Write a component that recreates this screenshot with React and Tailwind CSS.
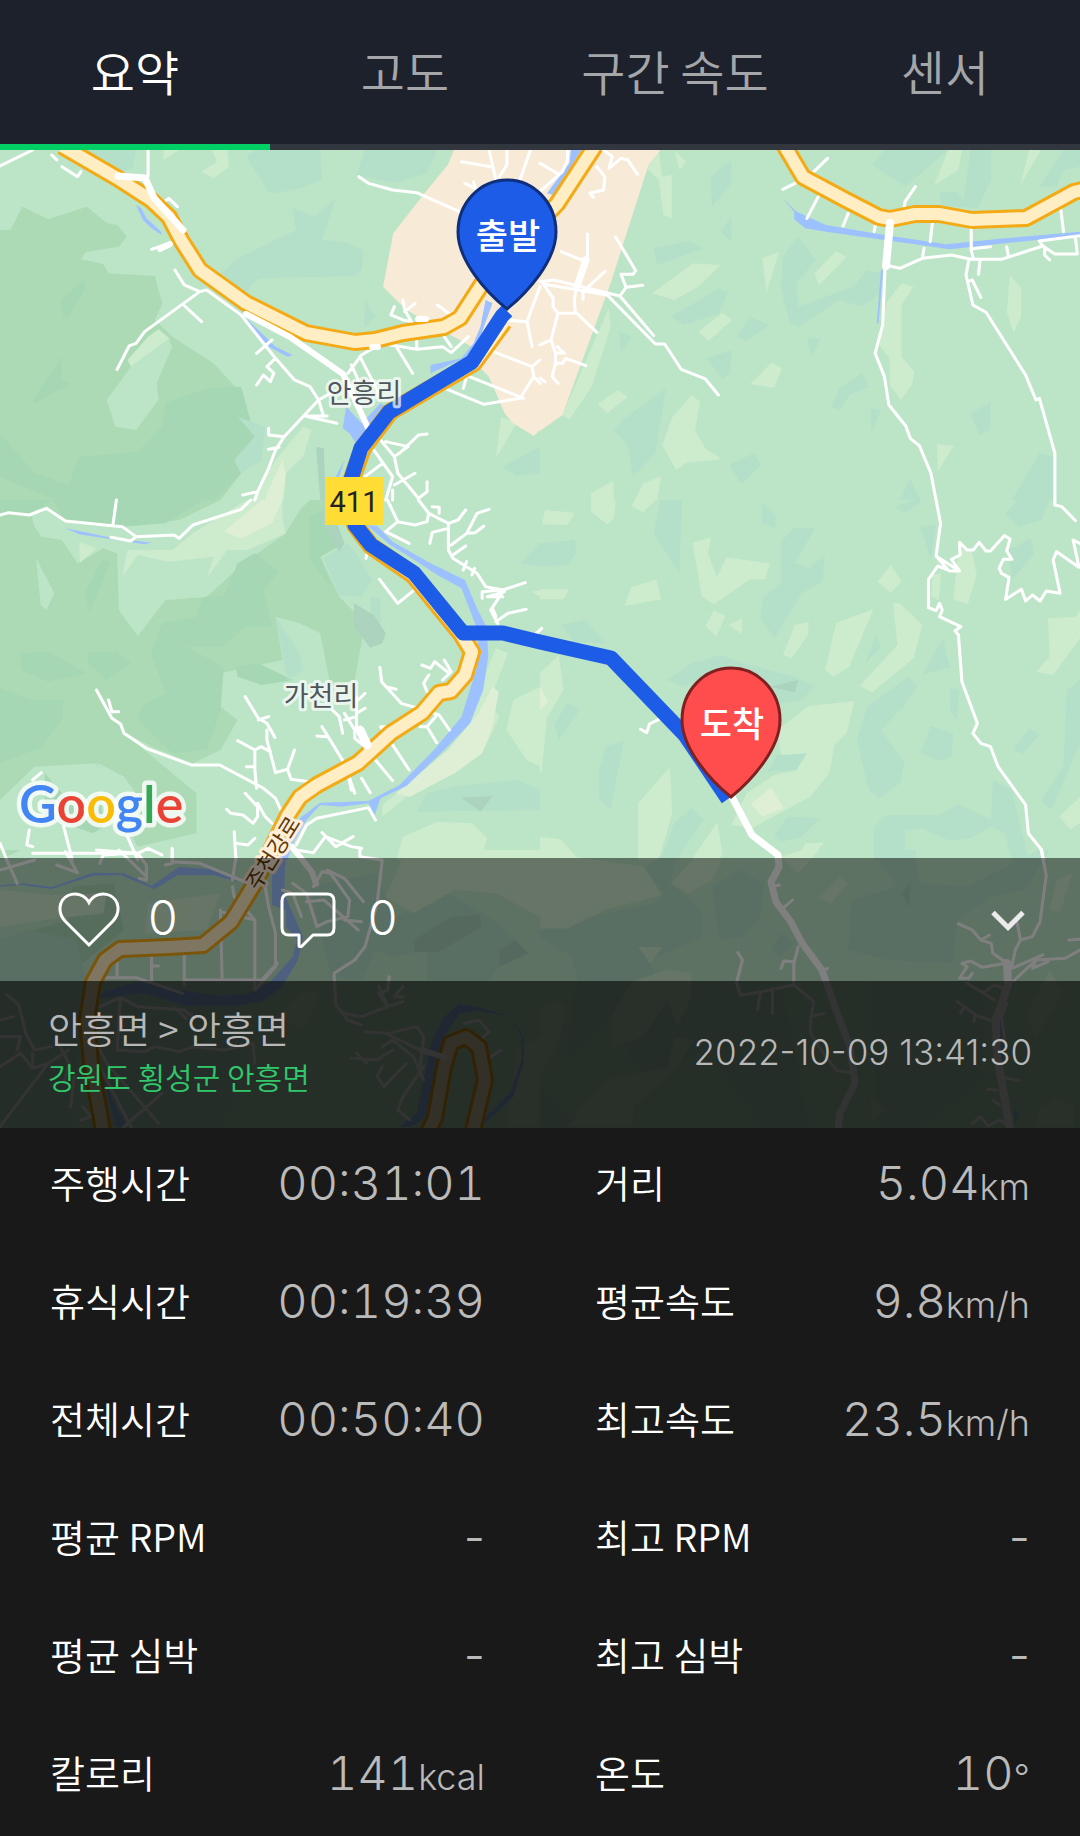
import { ChevronDown } from "lucide-react";

const TABS = ["요약", "고도", "구간 속도", "센서"];

const STATS = [
  { label: "주행시간", value: "00:31:01" },
  { label: "거리", value: "5.04", unit: "km" },
  { label: "휴식시간", value: "00:19:39" },
  { label: "평균속도", value: "9.8", unit: "km/h" },
  { label: "전체시간", value: "00:50:40" },
  { label: "최고속도", value: "23.5", unit: "km/h" },
  { label: "평균 RPM" },
  { label: "최고 RPM" },
  { label: "평균 심박" },
  { label: "최고 심박" },
  { label: "칼로리", value: "141", unit: "kcal" },
  { label: "온도", value: "10", unit: "°" },
];

// fill of each land layer, painted in this order
const LAND = [
  ["forest", "#abdab5"],
  ["deep", "#a5d7b4"],
  ["teal", "#b4dfc9"],
  ["base", "#bce4c7"],
  ["light", "#cdebcd"],
  ["pale", "#deefd5"],
  ["town", "#f7ead6"],
  ["rock", "#abd3bd"],
];

// every tile has its own 1568 x 1080 grid
const TILES = [
  {
    x: 0,
    y: 140,
    forest:
      "M0 270H30L65 200L140 238L252 200L310 250L340 255L368 290L345 320L250 335L235 358L300 372L315 400L450 408L460 450L472 490L450 540L500 590L620 670L700 760L740 890L680 960L700 1000L640 1080H0Z",
    deep:
      "M0 880L100 1000L200 1035L230 950L400 935L470 860L480 790L600 745L700 740L740 890L680 960L700 1000L620 1080H160L0 1010ZM175 480L245 420V450L200 530H185ZM95 780L180 650V720L205 730L100 790Z",
    teal:
      "M250 30H395L385 85L340 100ZM715 50L740 30H930L935 120L870 145L800 160L780 155ZM1060 30H1270L1240 100L1145 130L1035 105ZM620 420L690 355L860 270L850 205L915 230L975 175L935 300L1000 305L1055 330L1050 390L1028 408L750 415L700 470ZM1060 480L1090 530L1057 565ZM690 830L770 860L760 960L700 1000L680 960L740 890ZM1460 980L1568 920V1000L1500 1008Z",
    base: "M380 680L490 595L500 620L455 730L460 780L395 870L335 860L310 780Z",
    light:
      "M475 30H520L475 60ZM615 30H660L665 80L620 115L585 95L630 65ZM460 568L492 595L380 680L370 660L430 590ZM730 1080L800 960L880 860L905 870L880 950L830 1000L825 1080ZM1440 955L1455 830L1500 850Z",
    pale: "M775 1060L820 960L830 1000L820 1080H770Z",
    town:
      "M1318 30H1568V870L1550 888L1490 850L1465 820L1420 710L1390 680L1370 620L1300 580L1180 510L1112 440L1142 280L1240 150L1300 75Z",
    rock: "M918 920L940 925L945 1080H930Z",
    water:
      "M395 195L410 205L425 235L468 275L470 285L440 265L415 240ZM590 440L700 520L690 525ZM700 530L720 540L800 620L850 645L835 650L780 620ZM1410 480L1430 490L1405 560L1380 640L1250 700V675L1340 655L1375 610L1395 560ZM1005 800L1050 850L1105 790L1120 800L1040 920L1015 880L995 865ZM1000 960L985 1010H975Z",
    roads:
      "M0 78L95 30M430 30V108M150 45L165 60M180 80L225 110L235 95M440 328L490 310M508 390L535 435L580 455L600 450L700 525L800 655L855 720L900 740L925 780L825 890L800 930L780 985L748 1055L705 1065M748 1055L740 1080M580 455L420 575L395 610L375 618L340 688M530 492L585 545M790 600L745 640M800 655L775 680L795 700L785 725L765 705L745 735M925 780L960 760M925 780L940 830M885 828H950M885 828L978 850M825 890L780 885V865M810 922L780 928M1042 110L1070 130L1140 150L1210 158L1340 218M470 190L490 175L515 200M1090 620L1050 645L1010 700M1045 650L1100 760M1020 675L1040 720M1145 610L1198 700M1105 610L1210 628L1285 620L1310 638L1360 590M1210 600V625M1290 590L1310 620M1170 480L1175 510L1195 545L1170 540L1135 525L1145 500M1175 515L1205 490M1270 495L1310 525M1340 65L1425 80M1420 30L1440 120M1472 30V75L1450 110M1540 30L1510 120M1350 130L1380 145L1375 125M1420 630L1545 680L1568 660M1285 742L1405 793L1510 775L1550 710L1545 680M1350 705L1520 775M1355 710L1345 745M1550 710L1568 730M1470 540L1530 545L1568 440M1530 545L1545 620M1085 930L1140 1010L1120 1080M1105 900L1145 950L1155 1000L1215 1075M1120 905L1185 920L1145 950M1160 940L1215 885L1240 882M1110 970L1060 1010M1145 1035L1205 1000M1240 1025V1055L1215 1075M1140 1050V1080",
  },
  {
    x: 540,
    y: 140,
    teal:
      "M965 75L1000 30H1185L1060 140ZM1160 155H1210L1230 180L1250 30H1310V120L1270 205L1165 195ZM1450 140L1520 30H1568V80L1520 90L1500 140ZM495 110L555 60V130L500 200ZM525 275L555 230V305ZM330 325L430 303L475 325L340 375ZM380 530L520 445L545 460L520 520L420 555ZM750 290L800 360L745 430L750 500L910 440L950 390L995 400L990 460L935 500L870 480L750 560L725 545L700 450L705 350ZM570 590L610 530L665 555L600 602ZM485 655L558 630L550 700L530 718ZM775 595H815L790 650ZM230 575L265 590L235 640ZM215 870L240 840L365 745L335 940L270 1010L255 915ZM845 800L870 745L935 700L955 740L900 765L870 810ZM1250 820L1310 785L1305 870L1275 885ZM550 975L620 940L642 975L585 1033ZM1370 1080L1450 940L1495 950V1080ZM960 805L990 810L962 880ZM1075 1018L1105 1080H1045Z",
    light:
      "M390 30L425 65L405 90ZM310 85L345 30L355 110L383 105V235L358 225L345 120ZM1185 30H1225L1215 90L1145 135ZM1420 30H1455L1395 135ZM325 460L445 370L525 375L460 440L390 480ZM645 355L695 335L658 455ZM860 333L890 352L810 435L797 400ZM460 575L530 518L558 540L490 602ZM1050 430L1085 440L1050 495V650L1087 695L1080 735L1048 780L1015 735V655L985 615L1005 490ZM1365 405L1397 445V530L1375 578L1355 515ZM200 505L205 560L150 740L85 840L65 825ZM610 733L672 668L703 683L680 743ZM168 792L225 750L255 770L195 820ZM440 765L465 785L450 870L480 925L528 958L425 968L395 990L355 915L385 830ZM1153 912L1202 918L1155 993ZM275 1080L300 1030L352 1008L340 1080ZM148 1060L213 1023L215 1080H148Z",
    town: "M0 30H350L315 75L205 430L65 825L0 873Z",
    water:
      "M90 30H120L40 165L20 160L85 70ZM705 175L745 215L830 255L1000 285L1180 313L1350 295L1568 275V286L1350 310L1190 328L1000 300L830 275L770 265L738 238V215ZM990 390H996L983 550H978Z",
    roads:
      "M705 148L750 125M835 55L780 110M808 170L775 235M895 220L880 258M975 250L970 275M1090 140L1060 185L1055 215M1140 245L1133 305M1015 378L1045 385L1110 355L1195 345L1250 358H1340L1460 318L1450 303L1568 287M1115 325L1110 355M1252 265V330L1258 355M1255 326L1308 320M1355 320L1360 348M1460 318L1495 342H1560L1555 295M1465 320V345L1480 360M1512 205L1520 275M1245 360L1237 405L1257 495L1295 517L1410 705L1440 780L1450 775L1495 940V1080M1243 425L1255 420L1280 472M1278 360L1273 403M1002 378L995 555L973 640L1000 710L1013 795L1062 858L1075 895L1102 918L1135 1000L1150 1080M0 70L50 100M80 30V60L65 95L0 155M185 30L210 50L200 85L235 55L255 60L283 103M165 80L188 110L185 150L145 160L155 172M220 292L278 392L270 403H235L250 442L232 468L330 587M250 442L298 436M0 425L40 420L232 468M10 432L195 465L335 612H362L410 688L480 717L518 765M138 282V350L120 360L62 335M105 440L100 480L102 515L165 577M10 432L38 475V500L52 520H102M52 520L32 600L0 615M32 600L45 640V670L35 710L52 730M45 640L70 638M45 670H65L75 655L133 677M0 715L15 725M188 395L125 455V478M50 620L70 640",
  },
  {
    x: 0,
    y: 500,
    forest:
      "M0 45L90 40L100 80L120 110L180 120L225 190L300 145L340 160L345 330L400 408L480 300L600 290L660 235L700 195L830 100L870 30L900 0H960L990 130L930 170L985 290L1060 370L1030 540L960 560L930 400L870 370L800 350L820 480L640 520L640 620L690 660L640 750L560 790L440 740L350 690L570 880V1000L400 1040L330 900L280 790L100 800L0 900ZM0 0H640L520 60L350 80L190 65L130 25L0 45Z",
    deep:
      "M155 0H590L480 70L350 80L190 65ZM60 460L145 455L250 520L140 545L60 510ZM255 458L340 455L380 490L310 540L255 490ZM0 565L90 600L185 600L180 660L120 740L0 790ZM590 290L650 290L690 190L740 160L810 215L765 270L790 380H710L650 440L540 440L650 500L640 630L600 750L500 760L400 660L410 620L480 580L440 460L470 370L570 350ZM900 50L960 20L1000 130L930 170L960 260L900 180ZM530 245L570 165L592 180L555 260ZM245 280L300 175L320 190L260 335ZM685 500L750 490L850 540L760 555L690 530ZM0 0H150L90 40H0ZM130 820L230 940L280 880L350 950L270 1000L130 950Z",
    teal:
      "M940 175L1010 130L1040 170L1080 240L1050 290L985 285ZM1075 290L1105 295V375L1080 370ZM800 350L870 460L880 510L835 540ZM1510 190L1568 130V200ZM1320 860L1500 840L1568 870V930L1210 935L1240 880Z",
    base: "M365 170L650 150L690 190L600 290L480 300L400 408L345 330ZM105 175L158 280L135 330L118 315ZM285 790L360 830L410 900L390 980L300 1000Z",
    light:
      "M355 230L370 150L500 150L560 100L700 10L720 0H820V60L830 100L720 150L660 150L600 235L620 170L490 185L400 165ZM230 125L280 145L232 188ZM1440 445L1475 460L1420 610L1450 650L1400 760L1320 820L1180 890L1110 950V915L1240 810L1350 700L1390 570ZM1568 560V800L1530 780L1470 690L1490 600ZM1150 1080L1170 1010L1270 965L1370 970L1415 1015L1395 1080ZM1545 275L1568 270V290Z",
    pale: "M650 95L760 0H820L790 70L700 115ZM1430 560L1448 575L1430 680L1400 760L1320 820L1190 890L1150 880L1300 750L1390 640Z",
    rock: "M1028 310L1085 345L1120 400L1110 430L1075 443L1028 380ZM950 0L1000 130L985 155L930 60ZM1340 893L1430 888L1395 935Z",
    water:
      "M190 85L330 115L440 128L420 133L230 103ZM1065 75L1095 78L1140 125L1250 190L1350 240L1385 325L1412 380L1418 465L1403 570L1365 670L1290 750L1180 858L1105 895L1088 945L1070 910L990 920L930 915L890 960L850 1030L835 1080H820L870 955L930 908L1070 903L1160 855L1260 750L1340 650L1385 500L1390 400L1340 265L1270 225L1195 175L1130 133Z",
    roads:
      "M0 45L25 38L85 45L135 25L190 63L355 80L395 110L505 105L520 115L560 75L700 28L728 0M338 0L328 75M322 112L380 123L395 110M280 570L325 655L350 672L360 700L425 745L555 795H638L765 865L800 895L820 940M315 600L325 635L345 635M712 590L750 655L775 670L798 712M750 660L780 650M775 690V720L800 818L835 808L855 750M835 808L845 838L920 848M690 722L740 750L758 740L785 755M740 750V810L745 865M715 800H740M712 880L748 920V950L735 970L705 945L670 940L658 928M748 910L770 950L790 970M1103 502L1108 545L1165 610L1215 625M1120 560L1150 568M1120 680H1105L1188 810M935 680L1000 790L1030 880M920 708L950 710M1010 820L1020 870M1050 835L1075 878M1090 780L1140 842M1215 625L1275 645L1305 690M1240 680L1268 728M1220 680H1240L1265 650M1225 495L1250 505L1262 485L1280 500L1305 520M1290 480L1310 515L1285 540M1245 525L1230 550L1240 575M1102 238L1155 310L1205 268M1068 145L1063 175M1125 0L1155 65L1120 95L1188 130M1155 65L1205 75L1240 65L1245 40L1215 0M1245 40L1302 70V150L1315 175L1385 220L1410 260L1460 270L1525 248M1255 20L1275 22V40M1302 70L1330 60L1352 30M1302 85L1255 97L1248 130M1310 135L1355 100L1385 40L1420 28M1355 100L1380 98L1405 78M1315 165L1352 138M1355 185L1345 210M1378 205L1370 225M1460 275L1425 330L1445 370M1460 290H1415L1465 275M1400 295L1400 275L1455 270M1430 325L1440 350M1440 365L1475 340L1528 328M965 630L985 650L995 700M1000 640L1030 690V715L1060 740M1000 660L1035 650M1035 590V690M1035 640L1060 625M1040 600L1060 580M860 1035L890 975L920 955L1070 923L1090 960M860 1050L910 1058L945 1010L1020 1040L1050 1045M935 998L975 1040L1025 1010M0 1030L20 1080M85 990L78 1035L95 1040M95 1060L400 1060L430 1045L470 1065M185 980L210 1080M370 1010L400 1080M500 1045V1080M680 995L685 1080M685 1030L720 1035L740 1015M95 840L120 818",
  },
  {
    x: 540,
    y: 500,
    teal:
      "M350 0H412L405 220L330 100ZM0 130L100 120L105 160L80 195L0 200ZM60 375L130 360L190 430L100 425ZM370 540L440 490L525 465L590 490L740 530L798 560L760 600L700 610L560 540L480 530L420 560ZM645 10L683 45V85L645 70ZM700 125L735 85H798L740 190L780 205L828 165L820 245L760 280L680 415L640 350L650 290L700 250ZM1350 40L1390 0H1480L1455 60L1390 80ZM1105 78L1150 75L1135 180ZM1030 20L1090 0H1110L1060 40ZM1360 150L1425 115L1435 160L1370 240ZM975 405L990 440L945 490ZM1170 415L1190 500L1110 525ZM950 620L1070 530L1095 560L1055 620L990 690L1058 790L1045 850L985 895L955 870L920 720ZM1135 678L1200 700L1195 770L1160 782L1105 760ZM1530 570L1568 540V730L1485 930L1455 900L1520 800ZM1375 750L1420 685L1450 705L1400 762ZM1190 560L1218 570L1210 660L1190 630ZM80 607L115 630L55 720L42 675ZM170 820L190 740L243 722L205 930L172 895ZM365 1040L390 970L440 925L475 960L420 1040L400 1080H350ZM680 1005L720 950L812 955L760 1010L700 1025ZM970 980L1005 945H1160L1215 912L1310 960L1315 840L1370 870L1400 1000L1420 1080H1370L1350 1000L1310 980L1250 1015L1190 1022L1110 985L1060 990V1080H970ZM690 765L775 760L745 810L660 815Z",
    light:
      "M148 0H220L215 55L195 73L148 35ZM275 0H335L300 37L265 18ZM15 30L100 38L80 75L5 73ZM0 268H85L68 298H0ZM265 262L338 238L352 298L245 318ZM443 128L497 112L488 160L513 232L542 172L667 190L655 238H610L505 313L470 290ZM505 330L538 348L512 410L480 378ZM547 375L588 355L586 402ZM740 375L780 365L778 405L730 475L705 465ZM860 368L968 328L898 500L852 530L828 510ZM1025 310H1045L1110 375L1085 475L965 577L928 558L1038 435ZM1018 195L1050 245L1018 278L980 245ZM1215 150L1253 148L1268 225L1242 313L1200 298ZM1140 225L1165 220L1158 300L1135 290ZM1475 355L1555 350L1568 330V415L1490 525L1440 515L1480 470ZM690 690L780 618L913 603L890 700L855 735L840 820L785 890L615 985L555 975L600 880L680 825L745 810L775 760L700 765ZM0 520L55 465L68 570L20 655L5 815H0ZM285 910L378 800L384 940L345 1080H285ZM515 965L530 1060L520 1080H440ZM0 1010L60 1018L115 1080H0ZM755 1060L770 1030L825 1028L780 1080H730ZM1508 950L1568 890V970L1540 988Z",
    pale: "M0 560L25 605L0 630ZM612 912L672 862L708 925L645 950Z",
    rock: "M670 560L750 540L740 577Z",
    roads:
      "M1150 0L1163 70L1150 168L1185 210L1155 198L1128 238V323L1150 332L1160 310L1168 330L1160 350L1222 380L1205 392L1215 405L1225 545L1270 670L1257 700L1280 730L1308 740L1330 800L1410 915L1418 1000L1457 1050L1462 1080M1150 168L1218 213H1190M1218 213L1195 178L1220 165L1218 127L1240 150H1258L1275 127L1295 153H1308L1348 107L1365 117L1355 152L1370 178H1345L1333 205L1340 220L1362 232L1352 298L1398 268L1410 303L1430 285L1452 303L1470 273L1510 280L1490 180L1500 155L1565 202L1548 120L1568 130M1495 0V15L1515 20L1555 62M345 658L318 672L310 698L292 688M5 385L-20 410",
  },
  {
    x: 0,
    y: 850,
    forest: "M0 0H60L0 30ZM210 110L330 100L360 240L240 340L0 350V270L200 210Z",
    teal:
      "M0 270L80 240L220 270L250 393L200 830H0ZM900 110L1090 70L1150 200L1300 130L1420 200L1500 270L1420 393H1240V300L1140 320L1090 300L1050 393L960 380ZM300 393L700 393V700L640 830H300Z",
    light:
      "M0 120L150 135L310 130L300 190L130 210L0 230ZM1180 0H1568V200L1440 130L1320 120L1200 190L1120 140ZM430 160L640 130L600 240L420 250ZM800 500L880 420L930 430L880 540ZM1500 600L1568 560V830H1470Z",
    rock: "M1200 270L1310 200L1390 195L1400 230L1275 305H1205ZM1450 300L1495 270L1535 310L1450 350Z",
    water:
      "M0 106L70 100L150 111L270 68L360 70L440 107L520 50L640 60L690 95L620 76L515 76L450 118L350 75L270 77L150 117L60 105L0 110ZM790 40L830 0L825 130L850 190L880 260L865 330L820 410L760 455L690 467H540L420 430L290 445L300 425L400 395L500 418L640 438L720 432L785 395L850 320L862 270L830 230L830 180L790 165ZM290 660L330 760L370 830H340ZM1252 580L1290 500L1335 462L1390 472L1480 500L1390 482L1335 490L1290 560L1240 800L1190 830H1160L1210 790ZM1480 500L1520 560V640L1490 740L1430 800L1390 830L1410 800L1480 730L1515 630L1515 560Z",
    roads:
      "M20 30L50 100M100 30L0 60M190 5L225 68L165 45M280 0L400 10L425 45V90L405 85M345 0L425 80M380 10L300 15L290 40M500 0V40L480 45M500 35L580 40L710 95M685 20L675 90M640 180L645 390M640 185L740 210V415M675 110L680 140L740 210M770 110L780 170L800 250V350L740 420M805 340L760 390H540M535 310V405M440 318V390M440 348H460M340 320V380M300 383H395L530 430M0 510L40 500M20 435L55 465L75 550L100 600L150 590M0 560L60 560M0 650L60 610L95 655L140 640L0 830M60 560L50 600M95 655V610M140 640L200 600M170 580L200 640L185 700M290 470L350 443L400 470L535 480L560 500M350 443L340 600L420 605L450 590L520 605L560 590L650 600L735 580L740 640M510 475L540 505M285 590L310 640L460 820M285 640L380 830M470 730L360 830M240 770L265 800L235 810M215 680L205 770M820 120L850 130L875 200M850 100L890 130L920 230L950 215L1010 200L1015 150L960 70L935 65L910 110M950 60L1000 85L1055 155M890 155L940 150L985 190L1040 240M1000 210L1050 215M1045 0V20L1110 30L1095 160L1060 290L1030 330L970 370L975 465L1010 510L1050 525M1060 545L1120 550L1230 605M1130 380L1125 420L1100 430L1125 470L1050 500L1000 490M1100 410L1125 470L1170 455M1170 410L1145 440L1170 440M1130 550L1210 530L1230 560L1220 650M1110 590L1140 570L1200 620L1230 690M1035 610L1065 640M1020 625L1095 630L1140 600M1110 650L1095 680L1115 710L1180 640M1230 650L1170 740L1155 780L1190 810M1350 520L1390 510L1420 545L1395 570M1455 600L1420 625",
  },
  {
    x: 540,
    y: 850,
    teal:
      "M295 60L375 0H400L380 100L470 180V260L320 330L290 290L350 393H110L90 320L0 260V240L150 200L330 160L355 130ZM500 110L580 60L650 100L640 200L590 260L520 270ZM905 150L1040 110L970 20V0H1090L1100 100L1240 110L1450 0H1480L1410 120L1310 140L1210 210L1200 340L1010 330L895 300ZM670 300L700 250L740 280L700 320ZM100 393H700L780 830H650L480 600L300 680L200 500L80 640ZM960 393L1300 393L1280 700L1100 830H980ZM0 700L100 830H0Z",
    light:
      "M0 24L100 20L300 50L355 135L200 175L80 235H0ZM380 100L450 24H530L500 90L430 130ZM810 145L870 80L895 100L845 160ZM1480 180L1500 90L1545 70L1510 190ZM285 290L355 292L320 340ZM700 20L760 0H810L750 70ZM210 590V490L270 393L370 360L440 370V440L400 530L370 450L300 560ZM75 830L190 690L370 650L390 560L450 570L390 660L270 770V830ZM0 480L45 450L75 470L60 560L0 680ZM1410 500L1480 360L1520 430L1440 560ZM1445 780L1500 740L1550 770V830H1440ZM960 735L1005 780L965 810Z",
    rock: "M1050 130L1075 100V175Z",
    water: "M1350 460L1325 500L1330 640L1345 660L1340 520ZM1375 780L1390 790L1380 820Z",
    roads:
      "M1455 0L1470 75L1452 215L1430 260L1395 270L1380 300L1370 350M1395 270L1385 215M1215 222L1255 240L1280 270L1310 280L1315 310L1350 335M1280 270L1305 255M1370 355L1460 315M1375 393L1440 330L1525 325L1568 300M1535 270L1568 268M1440 330L1430 355L1475 335M1350 340L1285 352L1250 333L1225 340L1240 350L1218 385H1245L1255 370M1240 400L1320 450M1290 425L1320 405L1345 415M1212 455L1265 495L1310 512M1235 470L1220 490M1265 495L1260 515M1355 460L1340 500L1350 580M1335 680L1390 692M1300 718L1325 720M1315 750L1335 765M1255 820L1280 800L1300 828L1335 810L1360 828M750 290L737 340V405L795 455L787 500L825 490M787 500L785 550L830 620L862 662L910 670M737 335L708 333L700 355M733 150L705 175M695 105L675 110M735 405L645 425L583 435L570 400L588 330L575 308M640 425L632 480M675 415V490M835 355L815 365",
  },
];

const HIGHWAYS = [
  "M62 146L117 178L151 200L169 217L181 240L200 270L246 303L306 333L355 342L375 340L403 333L444 327L460 318L482 284L500 262L557 204L595 146",
  "M780 138L803 177L846 200L879 217L890 219L915 214L939 214L972 220L1026 218L1074 192L1090 188",
  "M504 322L474 363L390 412L363 448L351 481L355 525L371 546L413 575L461 634L472 652L465 675L451 691L439 693L422 713L391 733L358 763L317 785L300 797L288 815L255 883L231 922L203 945L169 947L120 949L105 960L93 982L87 1020L91 1063L103 1130",
  "M428 1132L435 1118L444 1067L451 1043L466 1037L479 1047L485 1080L473 1130",
];

const AVENUES = [
  ["M731 795L752 835L778 855L779 867L771 882L776 902L791 922L802 943L822 970L836 1010L850 1047L855 1083L840 1113L838 1130", 7],
  ["M118 176L145 178L154 198L183 230", 7],
  ["M246 314L290 337L343 374L368 428", 6],
  ["M890 223L886 266", 8],
  ["M586 260L577 286", 7],
  ["M360 730L367 745", 9],
  ["M292 847L312 872L316 884", 6],
  ["M1007 963L1008 985L996 1020L997 1055L1010 1130", 8],
  ["M421 1050L444 1057", 6],
  ["M160 249L170 244M418 319H426M372 347H378", 6],
];

function Tile({ tile, children }) {
  return <g transform={`translate(${tile.x} ${tile.y}) scale(0.3444 0.3333)`}>{children}</g>;
}

function Pin({ x, y, fill, stroke, label }) {
  return (
    <g transform={`translate(${x} ${y})`}>
      <path
        d="M0 0C-20 -16 -49 -48 -49 -77C-49 -106 -27 -129 0 -129C27 -129 49 -106 49 -77C49 -48 20 -16 0 0Z"
        fill={fill}
        stroke={stroke}
        strokeWidth="3"
      />
      <text x="1" y="-60" textAnchor="middle" fontSize="35" fontWeight="500" fill="#fff">
        {label}
      </text>
    </g>
  );
}

function RideMap() {
  return (
    <svg
      viewBox="0 150 1080 978"
      preserveAspectRatio="xMidYMid slice"
      className="block aspect-[1080/978] w-full bg-[#bce4c7]"
      role="img"
      aria-label="주행 경로 지도"
    >
      {TILES.map((tile) => (
        <Tile key={`land-${tile.x}-${tile.y}`} tile={tile}>
          {LAND.map(([layer, color]) => (tile[layer] ? <path key={layer} d={tile[layer]} fill={color} /> : null))}
        </Tile>
      ))}
      {TILES.map((tile) => (
        <Tile key={`line-${tile.x}-${tile.y}`} tile={tile}>
          <path d={tile.water} fill="#9dc1ff" />
          <path d={tile.roads} fill="none" stroke="#fff" strokeWidth="9" strokeLinejoin="round" strokeLinecap="round" />
        </Tile>
      ))}
      <g fill="none" strokeLinejoin="round">
        {HIGHWAYS.map((d) => (
          <path key={d} d={d} stroke="#f4aa14" strokeWidth="18" />
        ))}
        {HIGHWAYS.map((d) => (
          <path key={d} d={d} stroke="#ffedc4" strokeWidth="12" />
        ))}
        {AVENUES.map(([d, width]) => (
          <path key={d} d={d} stroke="#fff" strokeWidth={width} strokeLinecap="round" />
        ))}
        <path
          d="M507 311L502 316L472 362L389 412L361 448L351 479L355 525L371 545L414 573L463 633H503L540 642L611 658L685 735L728 799"
          stroke="#1c5ce7"
          strokeWidth="15"
        />
      </g>

      <rect x="325" y="477" width="58" height="48" rx="1" fill="#ffdd35" />
      <text x="354" y="512" textAnchor="middle" fontFamily="Roboto" fontSize="29" fill="#222">411</text>

      <g textAnchor="middle" strokeLinejoin="round" className="[paint-order:stroke]">
        <g fontSize="27" fill="#50555c" stroke="#fff" strokeOpacity="0.7" strokeWidth="6">
          <text x="364" y="403">안흥리</text>
          <text x="321" y="706">가천리</text>
        </g>
        <text
          transform="translate(273 853) rotate(-58)"
          y="8"
          fontSize="22"
          fill="#5f3808"
          stroke="#ffeed8"
          strokeWidth="6"
        >
          주천강로
        </text>
      </g>

      <text
        x="19"
        y="823"
        fontFamily="Lato"
        fontSize="52"
        fontWeight="600"
        stroke="#fff"
        strokeOpacity="0.8"
        strokeWidth="9"
        strokeLinejoin="round"
        className="[paint-order:stroke]"
      >
        <tspan fill="#4285f4">G</tspan>
        <tspan fill="#ea4335">o</tspan>
        <tspan fill="#fbbc05">o</tspan>
        <tspan fill="#4285f4">g</tspan>
        <tspan fill="#34a853">l</tspan>
        <tspan fill="#ea4335">e</tspan>
      </text>

      <Pin x={507} y={309} fill="#1c5ce7" stroke="#0f2f7c" label="출발" />
      <Pin x={731} y={797} fill="#ff4d4d" stroke="#802020" label="도착" />
    </svg>
  );
}

function HeartIcon() {
  return (
    <svg viewBox="0 0 62 56" className="h-14 w-[62px]" fill="none" stroke="currentColor" strokeWidth="3">
      <path d="M31 53L7 29C-1 20 1 8 10 3.500C18 0 27 3 31 10.500C35 3 44 0 52 3.500C61 8 63 20 55 29Z" />
    </svg>
  );
}

function CommentIcon() {
  return (
    <svg viewBox="0 0 56 56" className="size-14" fill="none" stroke="currentColor" strokeWidth="3" strokeLinejoin="round">
      <path d="M9 2H47Q54 2 54 9V36Q54 43 47 43H33L22 54Q19 56 19 53V43H9Q2 43 2 36V9Q2 2 9 2Z" />
    </svg>
  );
}

function Stat({ label, value, unit }) {
  return (
    <div className="flex h-[118px] items-center justify-between pb-1">
      <dt className="pb-2 text-[38px] font-[350] text-white">{label}</dt>
      <dd className="pb-1 font-['Inter','Noto_Sans_CJK_KR',sans-serif] text-[47px] font-light text-[#bababa]">
        {value ? <span className="tabular-nums">{value}</span> : "-"}
        {unit ? <span className="text-4xl">{unit}</span> : null}
      </dd>
    </div>
  );
}

export default function App() {
  return (
    <main className="min-h-screen bg-[#191919] font-['Noto_Sans_CJK_KR',sans-serif] text-white">
      <nav className="grid grid-cols-4 bg-[#1c212b]">
        {TABS.map((tab, i) => (
          <button
            key={tab}
            type="button"
            className={
              i === 0
                ? "h-[150px] border-b-6 border-[#00cf66] pb-1 text-5xl font-[350] text-white"
                : "h-[150px] border-b-6 border-[#32373f] pb-1 text-5xl font-[350] text-[#a4a6aa]"
            }
          >
            {tab}
          </button>
        ))}
      </nav>

      <section className="relative">
        <RideMap />
        <div className="absolute inset-x-0 bottom-0 font-['Inter','Noto_Sans_CJK_KR',sans-serif]">
          <div className="flex h-[123px] items-center bg-black/50 px-[58px]">
            <button type="button" aria-label="좋아요" className="flex items-center gap-7 text-5xl/[48px] font-light">
              <HeartIcon />
              <span className="pb-1">0</span>
            </button>
            <button type="button" aria-label="댓글" className="ml-[102px] flex items-center gap-8 text-5xl/[48px] font-light">
              <CommentIcon />
              <span className="pb-1">0</span>
            </button>
            <button type="button" aria-label="접기" className="-mr-4 ml-auto text-[#ebebeb]">
              <ChevronDown size={60} strokeWidth={2} strokeLinecap="butt" strokeLinejoin="miter" />
            </button>
          </div>
          <div className="flex h-[147px] items-center justify-between bg-black/80 px-12">
            <div className="pb-2 font-['Noto_Sans_CJK_KR',sans-serif] font-[350]">
              <h1 className="text-[37px]/[50px] text-[#b8b8b8]">안흥면 &gt; 안흥면</h1>
              <p className="text-[30px]/[46px] text-[#30c86b]">강원도 횡성군 안흥면</p>
            </div>
            <time className="pb-1 text-[35px] font-light text-[#b8b8b8]">2022-10-09 13:41:30</time>
          </div>
        </div>
      </section>

      <dl className="grid grid-cols-2 gap-x-[110px] px-[50px]">
        {STATS.map((stat) => (
          <Stat key={stat.label} {...stat} />
        ))}
      </dl>
    </main>
  );
}
